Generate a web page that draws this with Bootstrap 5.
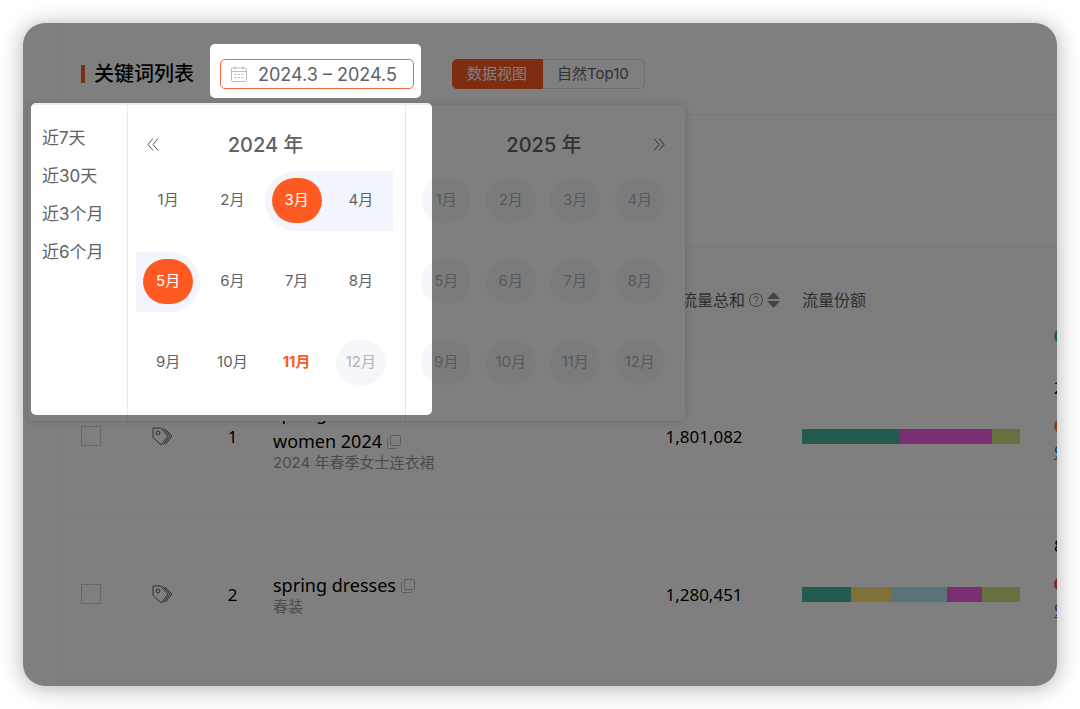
<!DOCTYPE html>
<html lang="zh-CN">
<head>
<meta charset="utf-8">
<meta name="viewport" content="width=device-width, initial-scale=1">
<title>关键词列表</title>
<link href="https://cdn.jsdelivr.net/npm/bootstrap@5.3.0/dist/css/bootstrap.min.css" rel="stylesheet">
<style>
  :root { --brand: #ff5a22; --ink: #606266; }
  body { font-family: Inter, "Noto Sans CJK SC", sans-serif; background: #fff; padding: 23px; min-height: 100vh; display: flex; color: #000; }
  button { font-family: inherit; }
  .panel { border-radius: 22px; background: #fff; box-shadow: 0 2px 22px rgba(0,0,0,.32); min-width: 0; }
  .panel-main { margin-left: 39px; border-left: 1px solid #f9f9f9; }

  .toolbar { padding: 36px 18px 25px 18px; border-bottom: 1px solid #f0f0f0; }
  .page-title { font-size: 20px; line-height: 30px; font-weight: 500; margin: 0 26px 0 0; gap: 9px; }
  .page-title::before { content: ""; width: 4px; height: 18px; background: var(--brand); }
  .date-field { z-index: 5; width: 194px; height: 30px; margin-right: 38px; }
  .date-field::before { content: ""; position: absolute; inset: -15px -7px -9px -10px; background: #fff; border-radius: 5px; }
  .date-field svg { position: absolute; left: 11px; top: 7px; }
  .date-field input { position: relative; height: 30px; padding: 0 0 0 37px; font-size: 18px; color: var(--ink); border: 1px solid #f0653a; border-radius: 5px; background: transparent; }
  .view-switch .btn { height: 30px; padding: 0 15px 0 14px; font-size: 15px; line-height: 28px; border: 1px solid #dcdcdc; color: var(--ink); border-radius: 5px; }
  .view-switch .btn.active { background: var(--brand); border-color: var(--brand); color: #fff; }
  .chart-slot { height: 128px; }

  .kw-table { table-layout: fixed; width: calc(100% + 60px); margin: 0; font-family: "Noto Sans", "Noto Sans CJK SC", sans-serif; font-size: 17px; }
  .kw-table > :not(caption) > * > * { padding: 0; vertical-align: middle; border-color: #fafafa; color: #000; }
  .kw-table thead th { height: 115px; background: #fafafa; color: #5c5e62; font-weight: 400; font-size: 16px; font-family: Inter, "Noto Sans CJK SC", sans-serif; padding-bottom: 0; }
  .kw-table tbody td { height: 158px; }
  .kw-table tbody .tool-cell { padding-bottom: 5px; }
  .kw-table tbody .kw-cell { padding: 0 0 5px 13px; }
  .kw-table .share-cell { padding-left: 22px; }
  .kw-table tbody .share-cell { padding-bottom: 2px; }
  .kw-table tbody .more-cell { padding: 16px 0 0 17px; vertical-align: top; }
  .kw-table thead .more-cell { padding: 58px 0 0 17px; }
  .more-cell .dot { margin: 19px 0 6px; }
  .kw-table .form-check-input { width: 20px; height: 20px; margin: 0; border: 1px solid #d0d0d0; border-radius: 0; vertical-align: middle; }
  .kw-name { font-size: 18px; line-height: 28px; width: 180px; }
  .kw-name svg { display: block; }
  .kw-zh { font-family: Inter, "Noto Sans CJK SC", sans-serif; font-size: 15px; line-height: 16px; color: #999; }
  .icon-btn { background: none; border: 0; padding: 0; line-height: 1; }
  .kw-name .icon-btn { vertical-align: -1px; }
  .share-bar { height: 15px; width: 218px; border-radius: 0; background: none; }
  .dot { width: 14px; height: 14px; border-radius: 7px; }
  .c-teal { background: #46b6a0; } .c-pink { background: #f45ee8; } .c-lime { background: #d2e080; }
  .c-gold { background: #fee070; } .c-sky { background: #b0e8f0; } .c-orange { background: #f58030; } .c-red { background: #f05038; }

  .range-menu { position: absolute; left: 5px; top: 82px; width: 657px; height: 316px; background: #fff; border-radius: 5px; box-shadow: 0 0 8px rgba(0,0,0,.16); z-index: 2; color: var(--ink); }
  .shortcuts { width: 100px; padding: 14px 0 0 14px; border-right: 1px solid #e6e8eb; }
  .shortcuts button { display: block; border: 0; background: none; padding: 0; font-size: 17px; line-height: 38px; color: var(--ink); }
  .year-pane { width: 277px; padding: 25px 12px 0 8px; }
  .year-pane + .year-pane { width: 279px; border-left: 1px solid #e6e8eb; }
  .year-head { height: 30px; font-size: 20px; font-weight: 500; padding-left: 2px; }
  .year-head .icon-btn { position: absolute; top: 8px; display: flex; }
  .year-head .prev { left: 11px; }
  .year-head .next { right: 7px; }
  .months { display: grid; grid-template-columns: repeat(4, 1fr); }
  .months button { height: 81px; border: 0; background: none; padding: 0; font-size: 15px; color: var(--ink); display: flex; align-items: center; }
  .months span { flex: 1; height: 60px; display: flex; align-items: center; justify-content: center; }
  .months i { font-style: normal; width: 50px; height: 45px; border-radius: 23px; display: flex; align-items: center; justify-content: center; }
  .months .in-range span { background: #f2f6fc; }
  .months .range-start span { border-radius: 30px 0 0 30px; }
  .months .range-end span { border-radius: 0 30px 30px 0; }
  .months .picked i { background: var(--brand); color: #fff; }
  .months .today { color: var(--brand); font-weight: 700; }
  .months :disabled { color: #b0b3b8; }
  .months :disabled i { background: #f5f7fa; }

  /* tour spotlight: dims the whole panel except the framed area */
  .spotlight { position: absolute; left: 8px; top: 80px; width: 401px; height: 312px; border-radius: 5px; box-shadow: 0 0 0 3000px rgba(0,0,0,.5); z-index: 3; pointer-events: none; }
</style>
</head>
<body>
<svg class="d-none">
  <symbol id="tags" viewBox="0 0 21 19"><g fill="none" stroke="currentColor" stroke-width="1" stroke-linejoin="round"><path d="M1 1h7.500L16 9l-6 8q-1 1-2 0L1 10.500z"/><path d="M10.500 1L18 9l-6.500 8.500M13 2l7 7-6.500 8"/><circle cx="6" cy="6" r="1.900"/></g></symbol>
  <symbol id="copy" viewBox="0 0 14 14"><g fill="none" stroke="currentColor" stroke-width="1"><rect x="3.500" y=".5" width="10" height="10" rx="1"/><path d="M1.500 3.500a1 1 0 0 0-1 1v8a1 1 0 0 0 1 1h8a1 1 0 0 0 1-1"/></g></symbol>
</svg>
<main class="panel position-relative overflow-hidden flex-grow-1">
  <div class="panel-main">
    <header class="toolbar d-flex align-items-center">
      <h1 class="page-title d-flex align-items-center">关键词列表</h1>
      <div class="date-field position-relative">
        <svg width="16" height="16" viewBox="0 0 16 16" fill="none" stroke="#b9bcc2"><rect x=".5" y="2" width="15" height="13.500" rx="1"/><path d="M.5 5.500h15M4 0v3.500M12 0v3.500"/><path d="M3.500 8.500h9M3.500 11.500h9" stroke-dasharray="2 1.500"/></svg>
        <input class="form-control" type="text" value="2024.3 – 2024.5" aria-label="日期范围">
      </div>
      <div class="btn-group view-switch">
        <button class="btn active" type="button">数据视图</button>
        <button class="btn" type="button">自然Top10</button>
      </div>
    </header>
    <div class="chart-slot"></div>
    <table class="table kw-table">
      <colgroup><col style="width:56px"><col style="width:86px"><col style="width:55px"><col><col style="width:152px"><col style="width:257px"><col style="width:80px"></colgroup>
      <thead>
        <tr><th></th><th></th><th></th><th></th>
          <th><div class="d-flex align-items-center justify-content-end">流量总和
            <svg class="mx-1" width="14" height="14" viewBox="0 0 14 14" fill="none" stroke="#85878b"><circle cx="7" cy="7" r="6.500"/><path d="M5 5.500a2 2 0 1 1 3 1.700c-.7.400-1 .7-1 1.500M7 10v1"/></svg>
            <svg width="13" height="16" viewBox="0 0 13 16" fill="#85878b"><path d="M6.500 0l6.500 7H0zM6.500 16l6.500-7H0z"/></svg></div></th>
          <th class="share-cell">流量份额</th>
          <th class="more-cell"><div class="dot c-teal"></div></th></tr>
      </thead>
      <tbody>
        <tr>
          <td class="tool-cell text-center"><input class="form-check-input" type="checkbox" aria-label="选择 1"></td>
          <td class="tool-cell text-center"><button class="icon-btn" type="button" aria-label="标签"><svg width="21" height="19" color="#5c5e62"><use href="#tags"/></svg></button></td>
          <td class="text-center">1</td>
          <td class="kw-cell"><div class="kw-name">spring dresses for women 2024 <button class="icon-btn" type="button" aria-label="复制"><svg width="14" height="14" color="#bbb"><use href="#copy"/></svg></button></div><div class="kw-zh">2024 年春季女士连衣裙</div></td>
          <td class="text-center">1,801,082</td>
          <td class="share-cell"><div class="progress share-bar"><div class="c-teal" style="width:45%"></div><div class="c-pink" style="width:42%"></div><div class="c-lime" style="width:13%"></div></div></td>
          <td class="more-cell"><div>2</div><div class="dot c-orange"></div><a class="text-primary" href="#">9</a></td>
        </tr>
        <tr>
          <td class="tool-cell text-center"><input class="form-check-input" type="checkbox" aria-label="选择 2"></td>
          <td class="tool-cell text-center"><button class="icon-btn" type="button" aria-label="标签"><svg width="21" height="19" color="#5c5e62"><use href="#tags"/></svg></button></td>
          <td class="text-center">2</td>
          <td class="kw-cell"><div class="kw-name">spring dresses <button class="icon-btn" type="button" aria-label="复制"><svg width="14" height="14" color="#bbb"><use href="#copy"/></svg></button></div><div class="kw-zh">春装</div></td>
          <td class="text-center">1,280,451</td>
          <td class="share-cell"><div class="progress share-bar"><div class="c-teal" style="width:22.500%"></div><div class="c-gold" style="width:19%"></div><div class="c-sky" style="width:25%"></div><div class="c-pink" style="width:16%"></div><div class="c-lime" style="width:17.500%"></div></div></td>
          <td class="more-cell"><div>8</div><div class="dot c-red"></div><a class="text-primary" href="#">9</a></td>
        </tr>
      </tbody>
    </table>
  </div>

  <div class="range-menu d-flex">
    <div class="shortcuts">
      <button type="button">近7天</button><button type="button">近30天</button><button type="button">近3个月</button><button type="button">近6个月</button>
    </div>
    <section class="year-pane">
      <div class="year-head position-relative text-center">2024 年
        <button class="icon-btn prev" type="button" aria-label="上一年"><svg width="12" height="13" viewBox="0 0 12 13" fill="none" stroke="#5c5e62"><path d="M6 .5l-5 6 5 6M11 .5l-5 6 5 6"/></svg></button></div>
      <div class="months">
        <button type="button"><span><i>1月</i></span></button><button type="button"><span><i>2月</i></span></button><button type="button" class="in-range range-start picked"><span><i>3月</i></span></button><button type="button" class="in-range"><span><i>4月</i></span></button>
        <button type="button" class="in-range range-end picked"><span><i>5月</i></span></button><button type="button"><span><i>6月</i></span></button><button type="button"><span><i>7月</i></span></button><button type="button"><span><i>8月</i></span></button>
        <button type="button"><span><i>9月</i></span></button><button type="button"><span><i>10月</i></span></button><button type="button" class="today"><span><i>11月</i></span></button><button type="button" disabled><span><i>12月</i></span></button>
      </div>
    </section>
    <section class="year-pane">
      <div class="year-head position-relative text-center">2025 年
        <button class="icon-btn next" type="button" aria-label="下一年"><svg width="12" height="13" viewBox="0 0 12 13" fill="none" stroke="#5c5e62"><path d="M1 .5l5 6-5 6M6 .5l5 6-5 6"/></svg></button></div>
      <div class="months">
        <button type="button" disabled><span><i>1月</i></span></button><button type="button" disabled><span><i>2月</i></span></button><button type="button" disabled><span><i>3月</i></span></button><button type="button" disabled><span><i>4月</i></span></button>
        <button type="button" disabled><span><i>5月</i></span></button><button type="button" disabled><span><i>6月</i></span></button><button type="button" disabled><span><i>7月</i></span></button><button type="button" disabled><span><i>8月</i></span></button>
        <button type="button" disabled><span><i>9月</i></span></button><button type="button" disabled><span><i>10月</i></span></button><button type="button" disabled><span><i>11月</i></span></button><button type="button" disabled><span><i>12月</i></span></button>
      </div>
    </section>
  </div>
  <div class="spotlight"></div>
</main>
<script src="https://cdn.jsdelivr.net/npm/bootstrap@5.3.0/dist/js/bootstrap.bundle.min.js"></script>
</body>
</html>
